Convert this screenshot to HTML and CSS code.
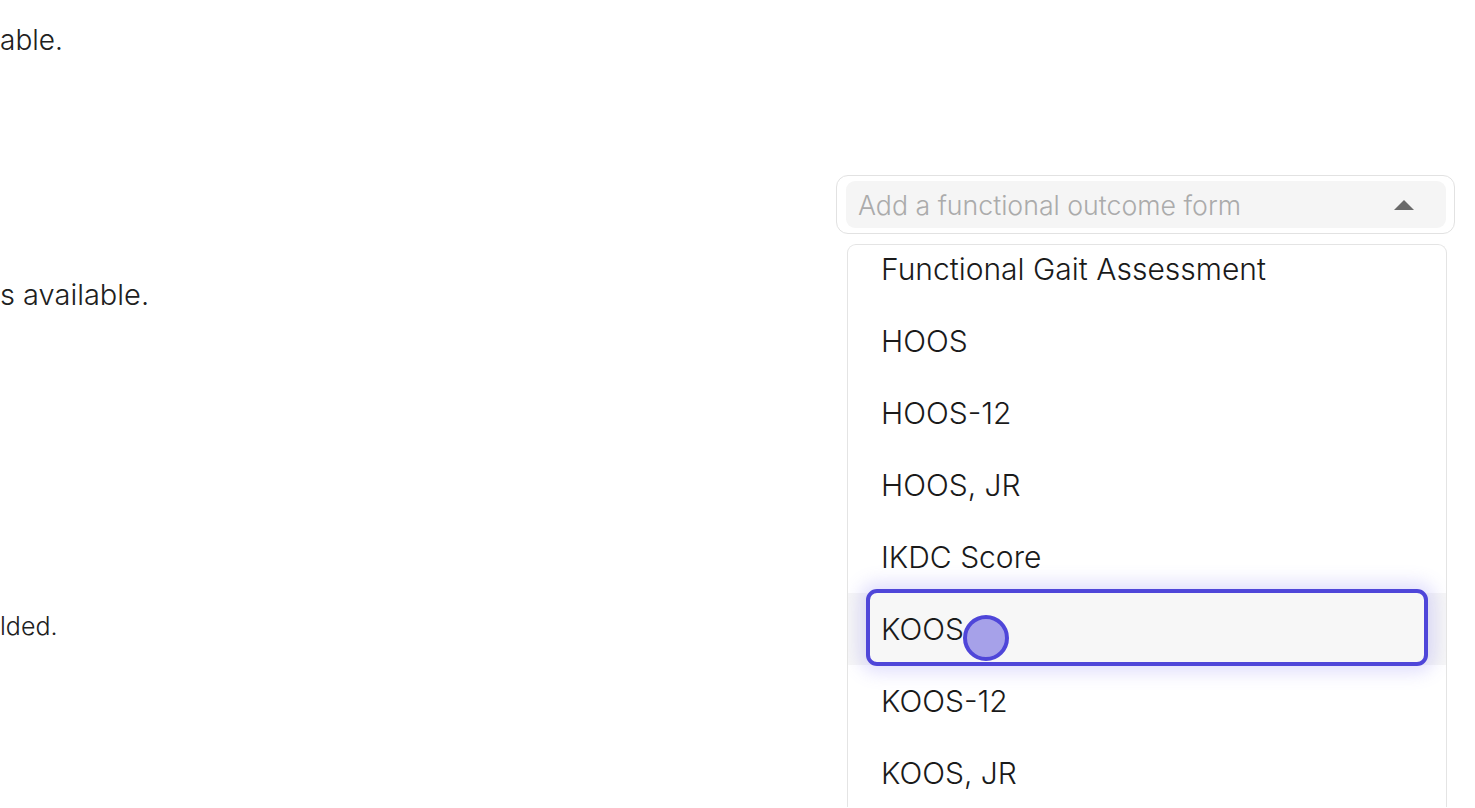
FILE: index.html
```html
<!DOCTYPE html>
<html>
<head>
<meta charset="utf-8">
<link rel="stylesheet" href="styles.css">
</head>
<body>
<div class="page">
  <div class="left">
    <p class="line l1">able.</p>
    <p class="line l2">s available.</p>
    <p class="line l3">lded.</p>
  </div>
  <div class="right">
    <div class="select">
      <div class="field">
        <span class="placeholder">Add a functional outcome form</span>
        <span class="caret"></span>
      </div>
    </div>
    <div class="menu">
      <ul class="options">
        <li class="option">Functional Gait Assessment</li>
        <li class="option">HOOS</li>
        <li class="option">HOOS-12</li>
        <li class="option">HOOS, JR</li>
        <li class="option">IKDC Score</li>
        <li class="option active"><span class="label">KOOS</span><span class="cursor"></span></li>
        <li class="option">KOOS-12</li>
        <li class="option">KOOS, JR</li>
      </ul>
    </div>
  </div>
</div>
</body>
</html>
```
FILE: styles.css
```css
html, body {
  margin: 0;
  padding: 0;
  background: #ffffff;
  overflow: hidden;
}
body {
  font-family: "Inter", "Liberation Sans", sans-serif;
  color: #1c1c1c;
  width: 1475px;
  height: 808px;
}
.page {
  display: flex;
  height: 808px;
}
.left {
  width: 836px;
  flex: none;
}
.line {
  margin: 0;
  font-size: 28px;
  line-height: 32px;
  color: #202020;
  font-weight: 300;
}
.l1 { margin-top: 24px; }
.l2 { margin-top: 223px; font-size: 29px; }
.l3 { margin-top: 299px; font-size: 25px; }

.right {
  width: 620px;
  padding-top: 175px;
}
.select {
  width: 619px;
  height: 59px;
  box-sizing: border-box;
  border: 1px solid #e2e2e2;
  border-radius: 12px;
  padding: 5px 8px 5px 9px;
}
.field {
  height: 47px;
  background: #f5f5f5;
  border-radius: 9px;
  display: flex;
  align-items: center;
  justify-content: space-between;
  padding: 0 32px 0 12px;
}
.placeholder {
  font-size: 26.7px;
  color: #ababab;
  font-weight: 300;
}
.caret {
  width: 0;
  height: 0;
  border-left: 10px solid transparent;
  border-right: 10px solid transparent;
  border-bottom: 10px solid #6a6a6a;
}
.menu {
  margin-top: 10px;
  margin-left: 11px;
  width: 600px;
  height: 563px;
  box-sizing: border-box;
  border: 1.5px solid #e4e4e4;
  border-bottom: none;
  border-radius: 9px 9px 0 0;
  overflow: hidden;
}
.options {
  list-style: none;
  margin: -12px 0 0 0;
  padding: 0;
}
.option {
  height: 72px;
  display: flex;
  align-items: center;
  padding-left: 33px;
  font-size: 30px;
  font-weight: 300;
  color: #1a1a1a;
  position: relative;
}
.option.active {
  background: #f6f6f6;
}
.option.active::before {
  content: "";
  position: absolute;
  left: 18px;
  right: 18px;
  top: -4px;
  bottom: -1px;
  border: 4px solid #4f46d9;
  border-radius: 11px;
  background: #f7f7f7;
  box-shadow: 0 0 18px 6px rgba(110, 100, 240, 0.22);
}
.label {
  position: relative;
}
.cursor {
  position: absolute;
  left: 115px;
  top: 22px;
  width: 38px;
  height: 38px;
  border: 4px solid #4f46d9;
  border-radius: 50%;
  background: #a6a1e9;
}
```
